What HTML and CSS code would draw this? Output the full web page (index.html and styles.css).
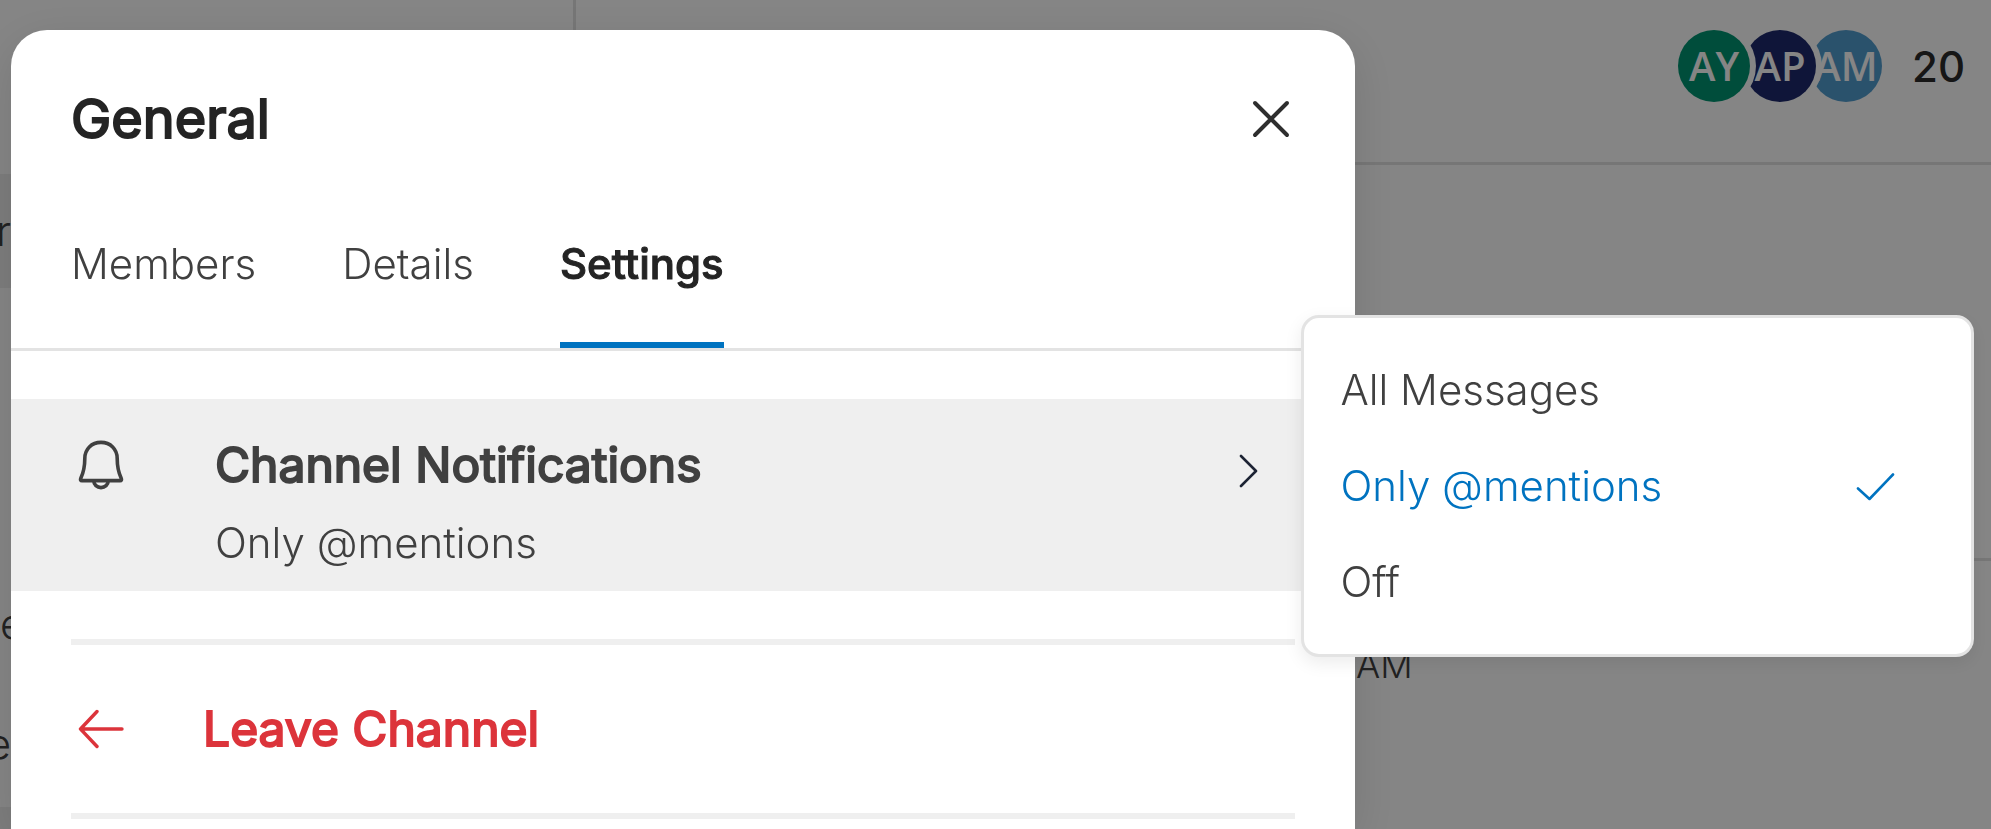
FILE: index.html
```html
<!DOCTYPE html>
<html lang="en">
<head>
<meta charset="utf-8">
<title>General - Channel settings</title>
<link rel="stylesheet" href="styles.css">
</head>
<body>
<div class="app">
  <aside class="sidebar">
    <div class="room room-active"><span>r</span></div>
    <div class="room room-lower"><span>e</span></div>
    <div class="room"><span>e</span></div>
    <div class="room-footer"></div>
  </aside>
  <main class="conversation">
    <header class="conversation-header">
      <div class="avatars">
        <span class="avatar avatar-green">AY</span>
        <span class="avatar avatar-navy">AP</span>
        <span class="avatar avatar-blue">AM</span>
      </div>
      <span class="member-count">20</span>
    </header>
    <div class="day-divider"></div>
    <time class="message-time">AM</time>
  </main>
</div>

<div class="overlay">
  <section class="modal" role="dialog" aria-labelledby="modal-title">
    <header class="modal-header">
      <h1 class="modal-title" id="modal-title">General</h1>
      <button class="close" type="button" aria-label="Close">
        <svg width="38" height="38" viewBox="0 0 38 38" fill="none" stroke="currentColor" stroke-width="4" stroke-linecap="round"><path d="M3 3 35 35M35 3 3 35"/></svg>
      </button>
    </header>
    <nav class="tabs" role="tablist">
      <button class="tab" type="button" role="tab">Members</button>
      <button class="tab" type="button" role="tab">Details</button>
      <button class="tab tab-active" type="button" role="tab" aria-selected="true">Settings</button>
    </nav>
    <div class="settings">
      <div class="setting">
        <button class="notifications" type="button">
          <svg class="bell" width="48" height="52" viewBox="0 0 48 52" fill="none" stroke="currentColor" stroke-width="3.6" stroke-linejoin="round"><path d="M24 3.4C14.5 3.4 7.8 10.2 7.8 19.5 7.8 28 7 32.500 3.800 39.300 3.200 40.900 3.600 41.600 5 41.600H43C44.400 41.600 44.800 40.900 44.200 39.300 41 32.500 40.200 28 40.200 19.500 40.200 10.200 33.500 3.400 24 3.400Z"/><path d="M16.800 42a7.200 6.600 0 0 0 14.400 0"/></svg>
          <span class="notifications-text">
            <span class="setting-name">Channel Notifications</span>
            <span class="setting-value">Only @mentions</span>
          </span>
          <svg class="chevron" width="20" height="36" viewBox="0 0 20 36" fill="none" stroke="currentColor" stroke-width="2.600" stroke-linecap="round" stroke-linejoin="round"><path d="M2 3 17 18 2 33"/></svg>
        </button>
        <div class="menu" role="menu">
          <button class="option" type="button" role="menuitemradio" aria-checked="false">All Messages</button>
          <button class="option option-selected" type="button" role="menuitemradio" aria-checked="true">Only @mentions
            <svg width="40" height="30" viewBox="0 0 40 30" fill="none" stroke="currentColor" stroke-width="2.600" stroke-linecap="round" stroke-linejoin="round"><path d="M2 17.500 13.500 28 37 3.500"/></svg>
          </button>
          <button class="option" type="button" role="menuitemradio" aria-checked="false">Off</button>
        </div>
      </div>
      <button class="leave" type="button">
        <svg width="48" height="42" viewBox="0 0 48 42" fill="none" stroke="currentColor" stroke-width="3.400" stroke-linecap="round" stroke-linejoin="round"><path d="M45 21H3.500M20 3.500 3.500 21 20 38.500"/></svg>
        <span class="setting-name">Leave Channel</span>
      </button>
    </div>
  </section>
</div>
</body>
</html>
```
FILE: styles.css
```css
* {
  box-sizing: border-box;
}

html,
body {
  height: 100%;
}

body {
  margin: 0;
  overflow: hidden;
  background: #fff;
  color: #404040;
  font-family: Inter, "Liberation Sans", sans-serif;
  font-size: 42px;
  font-weight: 300;
  line-height: 48px;
}

button {
  margin: 0;
  padding: 0;
  border: 0;
  background: none;
  color: inherit;
  font: inherit;
  text-align: left;
  cursor: pointer;
}

svg {
  display: block;
  flex: none;
}

/* Page behind the dialog */
.app {
  display: flex;
  height: 100%;
}

.sidebar {
  display: flex;
  flex: none;
  flex-direction: column;
  gap: 6px;
  width: 576px;
  padding-top: 174px;
  border-right: 3px solid #e3e3e3;
}

.room {
  display: flex;
  flex: none;
  align-items: center;
  height: 114px;
  overflow: hidden;
}

.room span {
  display: flex;
  justify-content: flex-end;
  width: 11px;
}

.room-active {
  background: #efefef;
}

.room-lower {
  margin-top: 273px;
}

.room-lower span {
  justify-content: flex-start;
}

.room-footer {
  flex: 1;
  background: #efefef;
}

.conversation {
  flex: 1;
}

.conversation-header {
  display: flex;
  align-items: center;
  justify-content: flex-end;
  gap: 30px;
  height: 165px;
  padding: 0 26px 31px 0;
  border-bottom: 3px solid #e3e3e3;
}

.avatars {
  display: flex;
}

.avatar {
  position: relative;
  display: flex;
  align-items: center;
  justify-content: center;
  width: 72px;
  height: 72px;
  margin-left: -6px;
  border-radius: 50%;
  box-shadow: 0 0 0 6px #fff;
  color: #fff;
  font-family: "Open Sans", sans-serif;
  font-size: 40px;
  font-weight: 600;
}

.avatar-green {
  z-index: 3;
  background: #009471;
}

.avatar-navy {
  z-index: 2;
  background: #1d2a6d;
}

.avatar-blue {
  z-index: 1;
  background: #529dcf;
}

.member-count {
  padding-top: 2px;
  color: #2b2b2b;
  font-weight: 500;
}

.day-divider {
  height: 396px;
  border-bottom: 3px solid #e3e3e3;
}

.message-time {
  display: block;
  padding: 80px 0 0 780px;
  font-size: 36px;
}

/* Dialog */
.overlay {
  position: fixed;
  z-index: 10;
  inset: 0;
  display: flex;
  padding: 30px 0 0 11px;
  background: rgba(0, 0, 0, 0.48);
}

.modal {
  width: 67.9%;
  border-radius: 36px 36px 0 0;
  background: #fff;
  box-shadow: 0 12px 48px rgba(0, 0, 0, 0.12);
}

.modal-header {
  display: flex;
  align-items: center;
  justify-content: space-between;
  padding: 57px 65px 0 60px;
}

.modal-title {
  margin: 0;
  color: #242424;
  font-size: 54px;
  font-weight: 400;
  line-height: 64px;
  -webkit-text-stroke: 2px currentColor;
}

.close {
  color: #2e2e2e;
}

.tabs {
  display: flex;
  gap: 86px;
  padding: 89px 60px 0;
  border-bottom: 3px solid #e3e3e3;
}

.tab {
  padding-bottom: 54px;
  border-bottom: 6px solid transparent;
}

.tab-active {
  border-color: #0073c0;
  color: #242424;
  font-weight: 500;
  -webkit-text-stroke: 1px currentColor;
}

.settings {
  padding-top: 48px;
}

.setting {
  position: relative;
}

.notifications {
  display: flex;
  width: 100%;
  padding: 36px 96px 18px 66px;
  background: #efefef;
}

.bell {
  margin-top: 4px;
}

.notifications-text {
  display: flex;
  flex: 1;
  flex-direction: column;
  gap: 18px;
  padding-left: 90px;
  line-height: 60px;
}

.setting-name {
  font-size: 48px;
  font-weight: 400;
  line-height: 60px;
  -webkit-text-stroke: 2px currentColor;
}

.chevron {
  margin-top: 18px;
  color: #1c2333;
}

.menu {
  position: absolute;
  top: -84px;
  left: calc(100% - 54px);
  width: 50%;
  padding: 24px 0;
  border: 3px solid #e3e3e3;
  border-radius: 18px;
  background: #fff;
  box-shadow: 0 6px 18px rgba(0, 0, 0, 0.08);
}

.option {
  display: flex;
  align-items: center;
  justify-content: space-between;
  width: 100%;
  height: 96px;
  padding: 0 75px 0 36px;
}

.option-selected {
  color: #0073c0;
}

.leave {
  display: flex;
  align-items: center;
  gap: 78px;
  width: calc(100% - 120px);
  margin: 48px 60px 0;
  padding: 54px 6px;
  border: solid #efefef;
  border-width: 6px 0;
  color: #dc343b;
}
```
